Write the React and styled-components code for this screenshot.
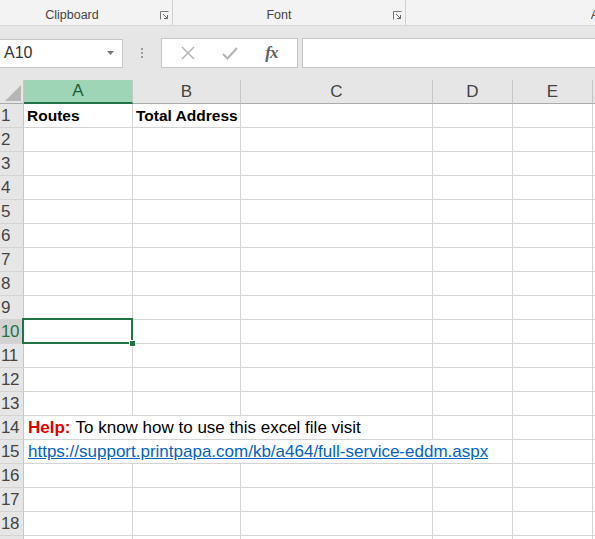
import React from "react";
import styled, { createGlobalStyle, css } from "styled-components";

const GlobalStyle = createGlobalStyle`
  html, body {
    margin: 0;
    padding: 0;
    background: #ffffff;
    font-family: "Liberation Sans", Arial, sans-serif;
    overflow: hidden;
  }
`;

const Page = styled.div`
  width: 595px;
  height: 539px;
  overflow: hidden;
  background: #ffffff;
`;

// ---- ribbon group labels ----
const Ribbon = styled.div`
  display: flex;
  height: 25px;
  background: #f3f3f3;
  border-bottom: 1px solid #d6d6d6;
  font-size: 12.5px;
  color: #444;
`;

const Group = styled.div`
  position: relative;
  width: ${(p) => p.$width}px;
  flex-shrink: 0;
  display: flex;
  align-items: flex-end;
  justify-content: ${(p) => (p.$align === "right" ? "flex-end" : "center")};
  padding-bottom: 3px;
  box-sizing: border-box;
  border-right: ${(p) => (p.$sep ? "1px solid #d0d0d0" : "none")};
`;

const GroupLabel = styled.span`
  padding-right: ${(p) => p.$pr || 0}px;
`;

const Launcher = styled.svg`
  position: absolute;
  right: 3px;
  bottom: 5px;
`;

// ---- formula bar ----
const FormulaBar = styled.div`
  display: flex;
  align-items: center;
  height: 54px;
  background: #e6e6e6;
`;

const NameBox = styled.div`
  width: 123px;
  height: 29px;
  box-sizing: border-box;
  background: #ffffff;
  border: 1px solid #c6c6c6;
  border-left: none;
  display: flex;
  align-items: center;
  justify-content: space-between;
  padding: 0 8px 0 4px;
  font-size: 16px;
  color: #333;
`;

const Dots = styled.div`
  width: 38px;
  display: flex;
  flex-direction: column;
  align-items: center;
  gap: 2px;
  span {
    width: 2px;
    height: 2px;
    background: #9a9a9a;
  }
`;

const ButtonsBox = styled.div`
  width: 137px;
  height: 30px;
  box-sizing: border-box;
  background: #ffffff;
  border: 1px solid #c6c6c6;
  display: flex;
  align-items: center;
  justify-content: space-around;
  padding: 0 6px;
`;

const Fx = styled.span`
  font-family: "Liberation Serif", "Times New Roman", serif;
  font-style: italic;
  font-weight: 700;
  font-size: 17px;
  color: #606060;
  letter-spacing: -1px;
`;

const Input = styled.div`
  flex: 1;
  height: 30px;
  margin-left: 4px;
  box-sizing: border-box;
  background: #ffffff;
  border: 1px solid #c6c6c6;
  border-right: none;
`;

// ---- sheet ----
const Sheet = styled.div`
  display: grid;
  grid-template-columns: 24px 109px 108px 192px 80px 80px 1fr;
  grid-auto-rows: 24px;
  font-size: 17px;
  color: #000;
`;

const Corner = styled.div`
  background: #e6e6e6;
  border-right: 1px solid #c6c6c6;
  border-bottom: 1px solid #ababab;
  position: relative;
  overflow: hidden;
  &::after {
    content: "";
    position: absolute;
    right: 2px;
    bottom: 2px;
    width: 0;
    height: 0;
    border-left: 16px solid transparent;
    border-bottom: 16px solid #b6b6b6;
  }
`;

const ColHead = styled.div`
  display: flex;
  align-items: center;
  justify-content: center;
  background: #e6e6e6;
  border-right: 1px solid #c6c6c6;
  border-bottom: 1px solid #ababab;
  font-size: 17px;
  color: #444;
  ${(p) =>
    p.$active &&
    css`
      background: #9fd5b7;
      color: #1d5f3a;
      border-bottom: 2px solid #217346;
    `}
`;

const RowHead = styled.div`
  display: flex;
  align-items: center;
  padding-left: 1px;
  background: #e6e6e6;
  border-right: 1px solid #c6c6c6;
  border-bottom: 1px solid #d4d4d4;
  font-size: 17px;
  letter-spacing: -0.5px;
  color: #444;
  overflow: hidden;
  ${(p) =>
    p.$active &&
    css`
      background: #d2d2d2;
      color: #217346;
      border-right: 2px solid #217346;
    `}
`;

const Cell = styled.div`
  position: relative;
  display: flex;
  align-items: center;
  padding-left: ${(p) => (p.$bold ? 3 : 4)}px;
  white-space: nowrap;
  border-right: 1px solid #d4d4d4;
  border-bottom: 1px solid #d4d4d4;
  grid-column: span ${(p) => p.$span || 1};
  font-weight: ${(p) => (p.$bold ? 700 : 400)};
  font-size: ${(p) => (p.$bold ? "15.5px" : "inherit")};
  ${(p) =>
    p.$selected &&
    css`
      &::after {
        content: "";
        position: absolute;
        left: -2px;
        top: -2px;
        right: -1px;
        bottom: -1px;
        border: 2px solid #217346;
        z-index: 2;
      }
      &::before {
        content: "";
        position: absolute;
        right: -4px;
        bottom: -4px;
        width: 5px;
        height: 5px;
        background: #217346;
        border: 1px solid #ffffff;
        z-index: 3;
      }
    `}
`;

const Help = styled.span`
  color: #e00000;
  font-weight: 700;
  margin-right: 5px;
`;

const Link = styled.span`
  color: #0563c1;
  text-decoration: underline;
`;

const columns = ["A", "B", "C", "D", "E"];

const rowContent = {
  1: [
    { text: "Routes", bold: true },
    { text: "Total Address", bold: true },
    {},
    {},
    {},
    {},
  ],
  14: [
    {
      span: 3,
      node: (
        <>
          <Help>Help:</Help>To know how to use this excel file visit
        </>
      ),
    },
    {},
    {},
    {},
  ],
  15: [
    {
      span: 4,
      node: <Link>https://support.printpapa.com/kb/a464/full-service-eddm.aspx</Link>,
    },
    {},
    {},
  ],
};

const App = () => {
  const rows = Array.from({ length: 19 }, (_, i) => i + 1);

  return (
    <Page>
      <GlobalStyle />
      <Ribbon>
        <Group $width={173} $sep>
          <GroupLabel $pr={28}>Clipboard</GroupLabel>
          <Launcher width="9" height="9" viewBox="0 0 9 9">
            <path d="M0.5 8.5V0.5H8.5" fill="none" stroke="#777" />
            <path d="M3 3L7.5 7.5M7.5 4V7.5H4" fill="none" stroke="#666" />
          </Launcher>
        </Group>
        <Group $width={233} $sep>
          <GroupLabel $pr={20}>Font</GroupLabel>
          <Launcher width="9" height="9" viewBox="0 0 9 9">
            <path d="M0.5 8.5V0.5H8.5" fill="none" stroke="#777" />
            <path d="M3 3L7.5 7.5M7.5 4V7.5H4" fill="none" stroke="#666" />
          </Launcher>
        </Group>
        <Group $width={189} $align="right">
          <GroupLabel style={{ marginRight: -4 }}>A</GroupLabel>
        </Group>
      </Ribbon>

      <FormulaBar>
        <NameBox>
          <span>A10</span>
          <svg width="7" height="4" viewBox="0 0 7 4">
            <path d="M0 0H7L3.5 4Z" fill="#777" />
          </svg>
        </NameBox>
        <Dots>
          <span />
          <span />
          <span />
        </Dots>
        <ButtonsBox>
          <svg width="14" height="14" viewBox="0 0 14 14">
            <path d="M1 1L13 13M13 1L1 13" stroke="#b4b4b4" strokeWidth="1.5" />
          </svg>
          <svg width="16" height="13" viewBox="0 0 16 13">
            <path d="M1 7L5.5 11.5L15 1" fill="none" stroke="#b4b4b4" strokeWidth="2" />
          </svg>
          <Fx>fx</Fx>
        </ButtonsBox>
        <Input />
      </FormulaBar>

      <Sheet>
        <Corner />
        {columns.map((c) => (
          <ColHead key={c} $active={c === "A"}>
            {c}
          </ColHead>
        ))}
        <ColHead />
        {rows.map((r) => {
          const content = rowContent[r] || [{}, {}, {}, {}, {}, {}];
          return (
            <React.Fragment key={r}>
              <RowHead $active={r === 10}>{r}</RowHead>
              {content.map((c, i) => (
                <Cell
                  key={i}
                  $span={c.span}
                  $bold={c.bold}
                  $selected={r === 10 && i === 0}
                >
                  {c.node || c.text}
                </Cell>
              ))}
            </React.Fragment>
          );
        })}
      </Sheet>
    </Page>
  );
};

export default App;
